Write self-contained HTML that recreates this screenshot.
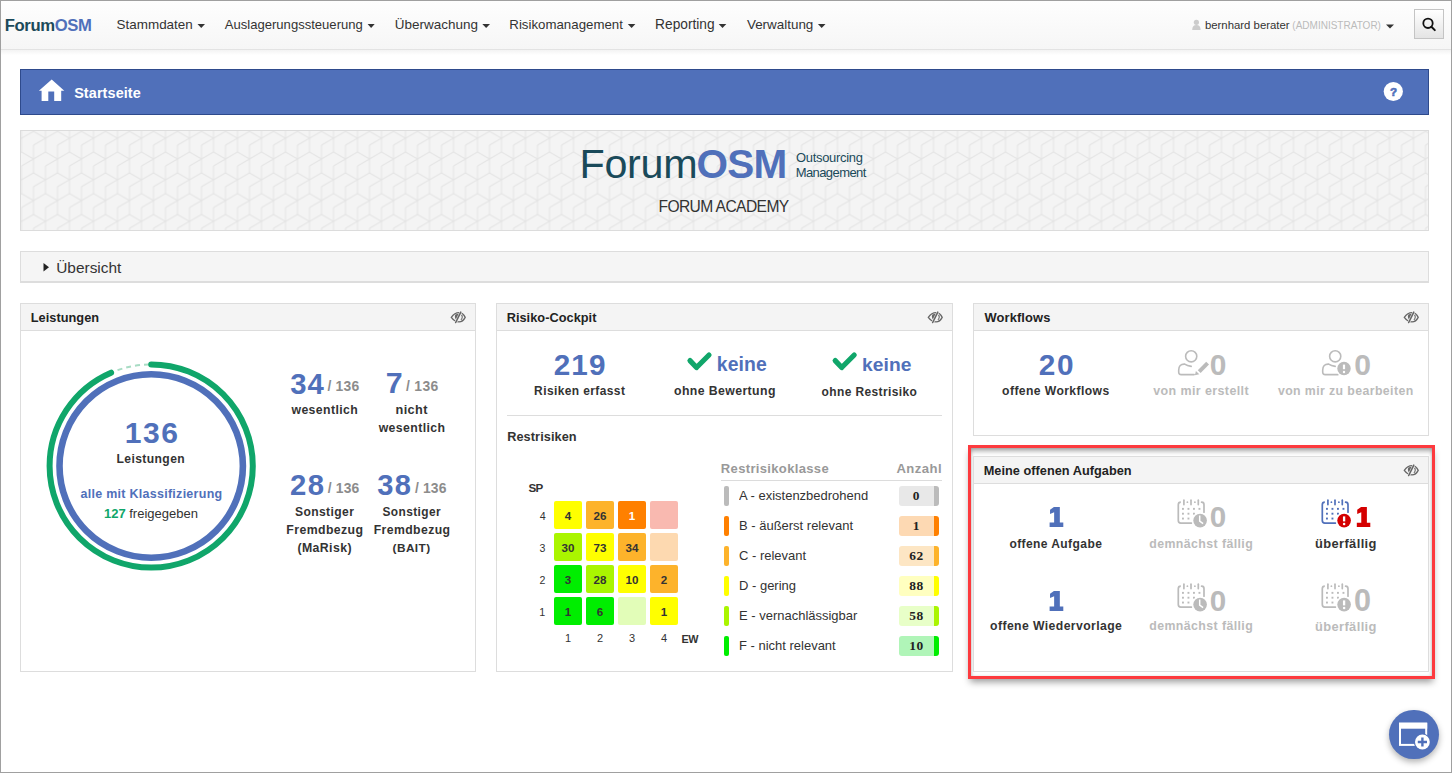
<!DOCTYPE html><html><head><meta charset="utf-8"><style>
html,body{margin:0;padding:0;width:1452px;height:773px;overflow:hidden;background:#fff}
.t{position:absolute;white-space:nowrap}
svg{position:absolute;overflow:visible}
</style></head><body>
<div style="position:absolute;left:1px;top:1px;width:1450px;height:49px;box-sizing:border-box;background:linear-gradient(#fefefe,#f6f6f6);border-bottom:1px solid #e3e3e3"></div>
<div style="position:absolute;left:1px;top:50px;width:1450px;height:5px;box-sizing:border-box;background:linear-gradient(#f3f3f3,#fff)"></div>
<div class="t" style="left:4.72px;top:18.00px;font:bold 16.67px/1 'Liberation Sans',sans-serif;letter-spacing:-0.356px;color:#1c4a5a;">Forum<span style="color:#5070ba">OSM</span></div>
<div class="t" style="left:116.60px;top:18.00px;font:normal 13.44px/1 'Liberation Sans',sans-serif;letter-spacing:0.000px;color:#333;">Stammdaten</div>
<svg style="left:0;top:0" width="1" height="1"><path d="M197.5,24 L205,24 L201.25,28 Z" fill="#333"/></svg>
<div class="t" style="left:224.80px;top:18.00px;font:normal 13.07px/1 'Liberation Sans',sans-serif;letter-spacing:0.000px;color:#333;">Auslagerungssteuerung</div>
<svg style="left:0;top:0" width="1" height="1"><path d="M367.6,24 L374.7,24 L371.15,28 Z" fill="#333"/></svg>
<div class="t" style="left:394.79px;top:18.00px;font:normal 13.48px/1 'Liberation Sans',sans-serif;letter-spacing:0.000px;color:#333;">Überwachung</div>
<svg style="left:0;top:0" width="1" height="1"><path d="M482.3,24 L490,24 L486.15,28 Z" fill="#333"/></svg>
<div class="t" style="left:509.34px;top:18.00px;font:normal 13.27px/1 'Liberation Sans',sans-serif;letter-spacing:0.000px;color:#333;">Risikomanagement</div>
<svg style="left:0;top:0" width="1" height="1"><path d="M627.8,24 L635.4,24 L631.5999999999999,28 Z" fill="#333"/></svg>
<div class="t" style="left:655.10px;top:18.00px;font:normal 13.72px/1 'Liberation Sans',sans-serif;letter-spacing:0.000px;color:#333;">Reporting</div>
<svg style="left:0;top:0" width="1" height="1"><path d="M718.7,24 L726.3,24 L722.5,28 Z" fill="#333"/></svg>
<div class="t" style="left:746.93px;top:18.00px;font:normal 13.43px/1 'Liberation Sans',sans-serif;letter-spacing:0.000px;color:#333;">Verwaltung</div>
<svg style="left:0;top:0" width="1" height="1"><path d="M817.9,24 L825.5,24 L821.7,28 Z" fill="#333"/></svg>
<svg style="left:0;top:0" width="1" height="1"><circle cx="1196.4" cy="22.3" r="2.6" fill="#ccc"/><path d="M1192.2,30 Q1192.2,25 1196.4,25 Q1200.6,25 1200.6,30 Z" fill="#ccc"/></svg>
<div class="t" style="left:1204.96px;top:20.00px;font:normal 11.36px/1 'Liberation Sans',sans-serif;letter-spacing:0.000px;color:#333;">bernhard berater</div>
<div class="t" style="left:1292.30px;top:21.00px;font:normal 10.02px/1 'Liberation Sans',sans-serif;letter-spacing:0.000px;color:#bbb;">(ADMINISTRATOR)</div>
<svg style="left:0;top:0" width="1" height="1"><path d="M1386,24.5 L1394,24.5 L1390,28.5 Z" fill="#333"/></svg>
<div style="position:absolute;left:1414px;top:9px;width:30px;height:30px;box-sizing:border-box;border:1px solid #c4c4c4;background:linear-gradient(#fff,#e4e4e4)"></div>
<svg style="left:0;top:0" width="1" height="1"><circle cx="1428" cy="23.3" r="4.7" fill="none" stroke="#111" stroke-width="1.8"/><path d="M1431.4,26.7 L1434.8,30.1" stroke="#111" stroke-width="2" stroke-linecap="round"/></svg>
<div style="position:absolute;left:20px;top:69px;width:1409px;height:46px;box-sizing:border-box;background:#5070ba;border:1px solid #2e4a8c"></div>
<svg style="left:0;top:0" width="1" height="1"><path d="M51.7,79.4 L64.3,90.8 L61.2,90.8 L61.2,101.1 L54.2,101.1 L54.2,91.6 L48.3,91.6 L48.3,101.1 L41.6,101.1 L41.6,90.8 L38.9,90.8 Z" fill="#fff"/></svg>
<div class="t" style="left:74.17px;top:86.00px;font:bold 14.42px/1 'Liberation Sans',sans-serif;letter-spacing:0.106px;color:#fff;">Startseite</div>
<svg style="left:0;top:0" width="1" height="1"><circle cx="1393.3" cy="91.5" r="9.6" fill="#fff"/></svg>
<div class="t" style="left:1389.88px;top:87.00px;font:bold 11.57px/1 'Liberation Sans',sans-serif;letter-spacing:0.000px;color:#5070ba;-webkit-text-stroke:0.6px #5070ba">?</div>
<svg style="left:20px;top:130px" width="1409" height="101"><defs><pattern id="cube" patternUnits="userSpaceOnUse" width="24" height="41.569" x="25.5" y="1.3">
<g stroke="#e3e3e3" stroke-width="1" fill="none">
<path d="M0,-6.93 V20.78 M0,34.64 V62.35 M24,-6.93 V20.78 M24,34.64 V62.35 M12,13.86 V41.57 M12,-27.71 V0"/>
<path d="M0,6.93 L12,0 M0,6.93 L-12,0 M0,6.93 L-12,13.86 M24,6.93 L36,0 M24,6.93 L12,0 M24,6.93 L12,13.86"/>
<path d="M0,48.5 L12,41.57 M0,48.5 L-12,41.57 M24,48.5 L12,41.57"/>
<path d="M12,27.71 L24,20.78 M12,27.71 L0,20.78 M12,27.71 L0,34.64"/>
<path d="M12,-13.86 L24,-20.78 M12,-13.86 L0,-20.78 M12,-13.86 L0,-6.93"/>
</g></pattern></defs>
<rect x="0.5" y="0.5" width="1408" height="100" fill="#f4f4f4" stroke="#dcdcdc"/>
<rect x="1" y="1" width="1407" height="99" fill="url(#cube)"/>
</svg>
<div class="t" style="left:579.50px;top:144.00px;font:normal 41.29px/1 'Liberation Sans',sans-serif;letter-spacing:-0.309px;color:#1a4a5a;">Forum</div>
<div class="t" style="left:696.48px;top:144.00px;font:bold 40.50px/1 'Liberation Sans',sans-serif;letter-spacing:-0.695px;color:#5070ba;">OSM</div>
<div class="t" style="left:796.12px;top:152.00px;font:normal 12.94px/1 'Liberation Sans',sans-serif;letter-spacing:-0.304px;color:#1a4a5a;">Outsourcing</div>
<div class="t" style="left:795.66px;top:166.00px;font:normal 13.01px/1 'Liberation Sans',sans-serif;letter-spacing:-0.578px;color:#1a4a5a;">Management</div>
<div class="t" style="left:658.45px;top:199.00px;font:normal 15.62px/1 'Liberation Sans',sans-serif;letter-spacing:-0.589px;color:#333;">FORUM ACADEMY</div>
<div style="position:absolute;left:20px;top:251px;width:1409px;height:32px;box-sizing:border-box;background:#f5f5f5;border:1px solid #ddd;border-bottom:2px solid #ddd"></div>
<svg style="left:0;top:0" width="1" height="1"><path d="M43.5,263 L49,267.3 L43.5,271.6 Z" fill="#222"/></svg>
<div class="t" style="left:56.24px;top:260.00px;font:normal 15.41px/1 'Liberation Sans',sans-serif;letter-spacing:0.000px;color:#333;">Übersicht</div>
<div style="position:absolute;left:20px;top:303px;width:456px;height:369px;box-sizing:border-box;border:1px solid #ddd;background:#fff"></div>
<div style="position:absolute;left:20px;top:303px;width:456px;height:28px;box-sizing:border-box;border:1px solid #ddd;background:#f4f4f4"></div>
<div class="t" style="left:30.67px;top:312.00px;font:bold 12.77px/1 'Liberation Sans',sans-serif;letter-spacing:0.044px;color:#222;">Leistungen</div>
<svg style="left:447px;top:308px" width="24" height="18">
<path d="M4.3,9.4 C6.5,6.3 9.3,4.7 12,4.7 C14.6,4.7 16.8,6.5 18.2,9.4 C16.8,12.2 14.6,13.9 12,13.9 C9.2,13.9 6.5,12.4 4.3,9.4 Z" fill="none" stroke="#666" stroke-width="1.3"/>
<path d="M8.3,6.5 L12.9,5.3 L9.6,12.6 Q7,9.6 8.3,6.5 Z" fill="#666"/>
<path d="M14.5,6.9 C15.6,8.2 15.6,10.4 13.9,11.8" fill="none" stroke="#666" stroke-width="1.1"/>
<path d="M14.1,3.6 L8.5,15" stroke="#f4f4f4" stroke-width="2.6"/>
<path d="M13.8,4.2 L8.7,14.5" stroke="#666" stroke-width="1.6" stroke-linecap="round"/>
</svg>
<div style="position:absolute;left:496px;top:303px;width:457px;height:369px;box-sizing:border-box;border:1px solid #ddd;background:#fff"></div>
<div style="position:absolute;left:496px;top:303px;width:457px;height:28px;box-sizing:border-box;border:1px solid #ddd;background:#f4f4f4"></div>
<div class="t" style="left:506.67px;top:312.00px;font:bold 12.76px/1 'Liberation Sans',sans-serif;letter-spacing:0.039px;color:#222;">Risiko-Cockpit</div>
<svg style="left:924px;top:308px" width="24" height="18">
<path d="M4.3,9.4 C6.5,6.3 9.3,4.7 12,4.7 C14.6,4.7 16.8,6.5 18.2,9.4 C16.8,12.2 14.6,13.9 12,13.9 C9.2,13.9 6.5,12.4 4.3,9.4 Z" fill="none" stroke="#666" stroke-width="1.3"/>
<path d="M8.3,6.5 L12.9,5.3 L9.6,12.6 Q7,9.6 8.3,6.5 Z" fill="#666"/>
<path d="M14.5,6.9 C15.6,8.2 15.6,10.4 13.9,11.8" fill="none" stroke="#666" stroke-width="1.1"/>
<path d="M14.1,3.6 L8.5,15" stroke="#f4f4f4" stroke-width="2.6"/>
<path d="M13.8,4.2 L8.7,14.5" stroke="#666" stroke-width="1.6" stroke-linecap="round"/>
</svg>
<div style="position:absolute;left:973px;top:303px;width:456px;height:133px;box-sizing:border-box;border:1px solid #ddd;background:#fff"></div>
<div style="position:absolute;left:973px;top:303px;width:456px;height:28px;box-sizing:border-box;border:1px solid #ddd;background:#f4f4f4"></div>
<div class="t" style="left:984.50px;top:312.00px;font:bold 12.88px/1 'Liberation Sans',sans-serif;letter-spacing:0.116px;color:#222;">Workflows</div>
<svg style="left:1400px;top:308px" width="24" height="18">
<path d="M4.3,9.4 C6.5,6.3 9.3,4.7 12,4.7 C14.6,4.7 16.8,6.5 18.2,9.4 C16.8,12.2 14.6,13.9 12,13.9 C9.2,13.9 6.5,12.4 4.3,9.4 Z" fill="none" stroke="#666" stroke-width="1.3"/>
<path d="M8.3,6.5 L12.9,5.3 L9.6,12.6 Q7,9.6 8.3,6.5 Z" fill="#666"/>
<path d="M14.5,6.9 C15.6,8.2 15.6,10.4 13.9,11.8" fill="none" stroke="#666" stroke-width="1.1"/>
<path d="M14.1,3.6 L8.5,15" stroke="#f4f4f4" stroke-width="2.6"/>
<path d="M13.8,4.2 L8.7,14.5" stroke="#666" stroke-width="1.6" stroke-linecap="round"/>
</svg>
<div style="position:absolute;left:968px;top:445px;width:467px;height:234px;box-sizing:border-box;border:3px solid #fd3a3e;box-shadow:0 5px 7px -2px rgba(0,0,0,.4), inset 0 4px 5px -1px rgba(0,0,0,.35), inset 0 0 3px rgba(0,0,0,.12)"></div>
<div style="position:absolute;left:973px;top:456px;width:456px;height:216px;box-sizing:border-box;border:1px solid #ddd;background:#fff"></div>
<div style="position:absolute;left:973px;top:456px;width:456px;height:28px;box-sizing:border-box;border:1px solid #ddd;background:#f4f4f4"></div>
<div class="t" style="left:983.67px;top:465.00px;font:bold 12.74px/1 'Liberation Sans',sans-serif;letter-spacing:0.028px;color:#222;">Meine offenen Aufgaben</div>
<svg style="left:1400px;top:461px" width="24" height="18">
<path d="M4.3,9.4 C6.5,6.3 9.3,4.7 12,4.7 C14.6,4.7 16.8,6.5 18.2,9.4 C16.8,12.2 14.6,13.9 12,13.9 C9.2,13.9 6.5,12.4 4.3,9.4 Z" fill="none" stroke="#666" stroke-width="1.3"/>
<path d="M8.3,6.5 L12.9,5.3 L9.6,12.6 Q7,9.6 8.3,6.5 Z" fill="#666"/>
<path d="M14.5,6.9 C15.6,8.2 15.6,10.4 13.9,11.8" fill="none" stroke="#666" stroke-width="1.1"/>
<path d="M14.1,3.6 L8.5,15" stroke="#f4f4f4" stroke-width="2.6"/>
<path d="M13.8,4.2 L8.7,14.5" stroke="#666" stroke-width="1.6" stroke-linecap="round"/>
</svg>
<div style="position:absolute;left:1389.4px;top:710.2px;width:49.2px;height:49.2px;border-radius:50%;background:#5070ba;box-shadow:0 3px 6px rgba(0,0,0,.3)"></div>
<svg style="left:0;top:0" width="1" height="1">
<rect x="1400" y="723.7" width="26.2" height="21.2" fill="none" stroke="#fff" stroke-width="2"/>
<rect x="1399" y="722.7" width="28.2" height="6" fill="#fff"/>
<circle cx="1422.4" cy="742" r="8.6" fill="#5070ba"/>
<circle cx="1422.4" cy="742" r="7.4" fill="#fff"/>
<path d="M1417.8,742 H1427 M1422.4,737.4 V746.6" stroke="#5070ba" stroke-width="2.4"/>
</svg>
<svg style="left:0;top:0" width="1" height="1">
<circle cx="151.2" cy="466" r="91.7" fill="none" stroke="#5070ba" stroke-width="6.6"/>
<circle cx="151.2" cy="466" r="101.6" fill="none" stroke="#a8dcc4" stroke-width="2" stroke-dasharray="5 4" transform="rotate(-90 151.2 466)"/>
<circle cx="151.2" cy="466" r="101.6" fill="none" stroke="#fff" stroke-width="8" stroke-dasharray="599.13 638.3716272094459" stroke-dashoffset="1.5" transform="rotate(-90 151.2 466)"/>
<circle cx="151.2" cy="466" r="101.6" fill="none" stroke="#10a66a" stroke-width="6" stroke-linecap="round" stroke-dasharray="596.13 638.3716272094459" transform="rotate(-90 151.2 466)"/>
</svg>
<div class="t" style="left:124.80px;top:418.00px;font:bold 30.06px/1 'Liberation Sans',sans-serif;letter-spacing:1.504px;color:#5070ba;">136</div>
<div class="t" style="left:116.51px;top:453.00px;font:bold 12.11px/1 'Liberation Sans',sans-serif;letter-spacing:0.400px;color:#333;">Leistungen</div>
<div class="t" style="left:80.53px;top:488.00px;font:bold 12.47px/1 'Liberation Sans',sans-serif;letter-spacing:0.283px;color:#5070ba;">alle mit Klassifizierung</div>
<div class="t" style="left:103.92px;top:507.00px;font:normal 13.03px/1 'Liberation Sans',sans-serif;letter-spacing:0.000px;color:#333;"><span style="color:#10a66a;font-weight:bold">127</span> freigegeben</div>
<div class="t" style="left:290.17px;top:369.00px;font:bold 29.28px/1 'Liberation Sans',sans-serif;letter-spacing:1.076px;color:#5070ba;">34</div>
<div class="t" style="left:327.56px;top:380.00px;font:bold 13.90px/1 'Liberation Sans',sans-serif;letter-spacing:0.174px;color:#8c8c8c;">/ 136</div>
<div class="t" style="left:385.69px;top:368.00px;font:bold 30.35px/1 'Liberation Sans',sans-serif;letter-spacing:0.000px;color:#5070ba;">7</div>
<div class="t" style="left:406.06px;top:380.00px;font:bold 13.90px/1 'Liberation Sans',sans-serif;letter-spacing:0.299px;color:#8c8c8c;">/ 136</div>
<div class="t" style="left:289.97px;top:470.00px;font:bold 29.31px/1 'Liberation Sans',sans-serif;letter-spacing:1.370px;color:#5070ba;">28</div>
<div class="t" style="left:327.76px;top:482.00px;font:bold 13.90px/1 'Liberation Sans',sans-serif;letter-spacing:0.174px;color:#8c8c8c;">/ 136</div>
<div class="t" style="left:377.37px;top:471.00px;font:bold 29.12px/1 'Liberation Sans',sans-serif;letter-spacing:1.180px;color:#5070ba;">38</div>
<div class="t" style="left:415.06px;top:482.00px;font:bold 13.90px/1 'Liberation Sans',sans-serif;letter-spacing:0.125px;color:#8c8c8c;">/ 136</div>
<div class="t" style="left:291.46px;top:404.00px;font:bold 12.28px/1 'Liberation Sans',sans-serif;letter-spacing:0.400px;color:#333;">wesentlich</div>
<div class="t" style="left:395.47px;top:404.00px;font:bold 12.73px/1 'Liberation Sans',sans-serif;letter-spacing:0.400px;color:#333;">nicht</div>
<div class="t" style="left:378.66px;top:422.00px;font:bold 12.27px/1 'Liberation Sans',sans-serif;letter-spacing:0.400px;color:#333;">wesentlich</div>
<div class="t" style="left:294.94px;top:506.00px;font:bold 12.10px/1 'Liberation Sans',sans-serif;letter-spacing:0.400px;color:#333;">Sonstiger</div>
<div class="t" style="left:286.30px;top:524.00px;font:bold 12.30px/1 'Liberation Sans',sans-serif;letter-spacing:0.400px;color:#333;">Fremdbezug</div>
<div class="t" style="left:297.49px;top:542.00px;font:bold 12.29px/1 'Liberation Sans',sans-serif;letter-spacing:0.400px;color:#333;">(MaRisk)</div>
<div class="t" style="left:382.54px;top:507.00px;font:bold 11.90px/1 'Liberation Sans',sans-serif;letter-spacing:0.400px;color:#333;">Sonstiger</div>
<div class="t" style="left:373.70px;top:524.00px;font:bold 12.24px/1 'Liberation Sans',sans-serif;letter-spacing:0.400px;color:#333;">Fremdbezug</div>
<div class="t" style="left:392.61px;top:543.00px;font:bold 11.83px/1 'Liberation Sans',sans-serif;letter-spacing:0.400px;color:#333;">(BAIT)</div>
<div class="t" style="left:553.66px;top:350.00px;font:bold 29.69px/1 'Liberation Sans',sans-serif;letter-spacing:1.121px;color:#5070ba;">219</div>
<div class="t" style="left:534.12px;top:386.00px;font:bold 11.97px/1 'Liberation Sans',sans-serif;letter-spacing:0.400px;color:#333;">Risiken erfasst</div>
<svg style="left:0;top:0" width="1" height="1"><path d="M690,360.6 L696.5,367.5 L709,355" fill="none" stroke="#10a66a" stroke-width="5.2" stroke-linecap="round" stroke-linejoin="round"/></svg>
<svg style="left:0;top:0" width="1" height="1"><path d="M835.2,360.6 L841.7,367.5 L854.2,355" fill="none" stroke="#10a66a" stroke-width="5.2" stroke-linecap="round" stroke-linejoin="round"/></svg>
<div class="t" style="left:716.84px;top:355.00px;font:bold 19.36px/1 'Liberation Sans',sans-serif;letter-spacing:0.116px;color:#5070ba;">keine</div>
<div class="t" style="left:862.05px;top:355.00px;font:bold 19.24px/1 'Liberation Sans',sans-serif;letter-spacing:0.041px;color:#5070ba;">keine</div>
<div class="t" style="left:674.01px;top:385.00px;font:bold 12.29px/1 'Liberation Sans',sans-serif;letter-spacing:0.400px;color:#333;">ohne Bewertung</div>
<div class="t" style="left:821.52px;top:386.00px;font:bold 11.98px/1 'Liberation Sans',sans-serif;letter-spacing:0.400px;color:#333;">ohne Restrisiko</div>
<div style="position:absolute;left:507px;top:415px;width:435px;height:1px;box-sizing:border-box;background:#ddd"></div>
<div class="t" style="left:507.17px;top:431.00px;font:bold 12.72px/1 'Liberation Sans',sans-serif;letter-spacing:0.091px;color:#333;">Restrisiken</div>
<div class="t" style="left:528.55px;top:482.00px;font:bold 11.62px/1 'Liberation Sans',sans-serif;letter-spacing:-0.851px;color:#333;">SP</div>
<div class="t" style="left:539.79px;top:511.00px;font:normal 10.72px/1 'Liberation Sans',sans-serif;letter-spacing:0.000px;color:#333;">4</div>
<div style="position:absolute;left:554px;top:501px;width:28px;height:28px;box-sizing:border-box;background:#ffff00;border-radius:2px"></div>
<div class="t" style="left:554px;top:509.8px;width:28px;text-align:center;font:bold 11.6px/1 'Liberation Sans',sans-serif;color:#333">4</div>
<div style="position:absolute;left:586px;top:501px;width:28px;height:28px;box-sizing:border-box;background:#fdb32b;border-radius:2px"></div>
<div class="t" style="left:586px;top:509.8px;width:28px;text-align:center;font:bold 11.6px/1 'Liberation Sans',sans-serif;color:#333">26</div>
<div style="position:absolute;left:618px;top:501px;width:28px;height:28px;box-sizing:border-box;background:#ff8000;border-radius:2px"></div>
<div class="t" style="left:618px;top:509.8px;width:28px;text-align:center;font:bold 11.6px/1 'Liberation Sans',sans-serif;color:#fff">1</div>
<div style="position:absolute;left:650px;top:501px;width:28px;height:28px;box-sizing:border-box;background:#f9b9b0;border-radius:2px"></div>
<div class="t" style="left:539.58px;top:543.00px;font:normal 10.57px/1 'Liberation Sans',sans-serif;letter-spacing:0.000px;color:#333;">3</div>
<div style="position:absolute;left:554px;top:533px;width:28px;height:28px;box-sizing:border-box;background:#aaf500;border-radius:2px"></div>
<div class="t" style="left:554px;top:541.8px;width:28px;text-align:center;font:bold 11.6px/1 'Liberation Sans',sans-serif;color:#333">30</div>
<div style="position:absolute;left:586px;top:533px;width:28px;height:28px;box-sizing:border-box;background:#ffff00;border-radius:2px"></div>
<div class="t" style="left:586px;top:541.8px;width:28px;text-align:center;font:bold 11.6px/1 'Liberation Sans',sans-serif;color:#333">73</div>
<div style="position:absolute;left:618px;top:533px;width:28px;height:28px;box-sizing:border-box;background:#fdb32b;border-radius:2px"></div>
<div class="t" style="left:618px;top:541.8px;width:28px;text-align:center;font:bold 11.6px/1 'Liberation Sans',sans-serif;color:#333">34</div>
<div style="position:absolute;left:650px;top:533px;width:28px;height:28px;box-sizing:border-box;background:#fdd9b0;border-radius:2px"></div>
<div class="t" style="left:539.47px;top:575.00px;font:normal 10.57px/1 'Liberation Sans',sans-serif;letter-spacing:0.000px;color:#333;">2</div>
<div style="position:absolute;left:554px;top:565px;width:28px;height:28px;box-sizing:border-box;background:#00ee00;border-radius:2px"></div>
<div class="t" style="left:554px;top:573.8px;width:28px;text-align:center;font:bold 11.6px/1 'Liberation Sans',sans-serif;color:#333">3</div>
<div style="position:absolute;left:586px;top:565px;width:28px;height:28px;box-sizing:border-box;background:#aaf500;border-radius:2px"></div>
<div class="t" style="left:586px;top:573.8px;width:28px;text-align:center;font:bold 11.6px/1 'Liberation Sans',sans-serif;color:#333">28</div>
<div style="position:absolute;left:618px;top:565px;width:28px;height:28px;box-sizing:border-box;background:#ffff00;border-radius:2px"></div>
<div class="t" style="left:618px;top:573.8px;width:28px;text-align:center;font:bold 11.6px/1 'Liberation Sans',sans-serif;color:#333">10</div>
<div style="position:absolute;left:650px;top:565px;width:28px;height:28px;box-sizing:border-box;background:#fdb32b;border-radius:2px"></div>
<div class="t" style="left:650px;top:573.8px;width:28px;text-align:center;font:bold 11.6px/1 'Liberation Sans',sans-serif;color:#333">2</div>
<div class="t" style="left:539.20px;top:607.00px;font:normal 10.72px/1 'Liberation Sans',sans-serif;letter-spacing:0.000px;color:#333;">1</div>
<div style="position:absolute;left:554px;top:597px;width:28px;height:28px;box-sizing:border-box;background:#00ee00;border-radius:2px"></div>
<div class="t" style="left:554px;top:605.8px;width:28px;text-align:center;font:bold 11.6px/1 'Liberation Sans',sans-serif;color:#333">1</div>
<div style="position:absolute;left:586px;top:597px;width:28px;height:28px;box-sizing:border-box;background:#00ee00;border-radius:2px"></div>
<div class="t" style="left:586px;top:605.8px;width:28px;text-align:center;font:bold 11.6px/1 'Liberation Sans',sans-serif;color:#333">6</div>
<div style="position:absolute;left:618px;top:597px;width:28px;height:28px;box-sizing:border-box;background:#e2fdb8;border-radius:2px"></div>
<div style="position:absolute;left:650px;top:597px;width:28px;height:28px;box-sizing:border-box;background:#ffff00;border-radius:2px"></div>
<div class="t" style="left:650px;top:605.8px;width:28px;text-align:center;font:bold 11.6px/1 'Liberation Sans',sans-serif;color:#333">1</div>
<div class="t" style="left:554px;top:633.4px;width:28px;text-align:center;font:normal 11px/1 'Liberation Sans',sans-serif;color:#333">1</div>
<div class="t" style="left:586px;top:633.4px;width:28px;text-align:center;font:normal 11px/1 'Liberation Sans',sans-serif;color:#333">2</div>
<div class="t" style="left:618px;top:633.4px;width:28px;text-align:center;font:normal 11px/1 'Liberation Sans',sans-serif;color:#333">3</div>
<div class="t" style="left:650px;top:633.4px;width:28px;text-align:center;font:normal 11px/1 'Liberation Sans',sans-serif;color:#333">4</div>
<div class="t" style="left:681.39px;top:634.00px;font:bold 10.85px/1 'Liberation Sans',sans-serif;letter-spacing:-0.259px;color:#333;">EW</div>
<div class="t" style="left:720.85px;top:462.00px;font:bold 13.04px/1 'Liberation Sans',sans-serif;letter-spacing:0.328px;color:#999;">Restrisikoklasse</div>
<div class="t" style="left:896.47px;top:462.00px;font:bold 13.10px/1 'Liberation Sans',sans-serif;letter-spacing:0.436px;color:#999;">Anzahl</div>
<div style="position:absolute;left:721px;top:480px;width:221px;height:1px;box-sizing:border-box;background:#dcdcdc"></div>
<div style="position:absolute;left:724px;top:486px;width:5px;height:20px;box-sizing:border-box;background:#bbb;border-radius:2px"></div>
<div class="t" style="left:739.1px;top:489px;font:normal 13.6px/1 'Liberation Sans',sans-serif;color:#333;transform:scaleX(0.955);transform-origin:0 0">A - existenzbedrohend</div>
<div style="position:absolute;left:899px;top:486px;width:40px;height:20px;box-sizing:border-box;background:#e8e8e8;border-radius:3px;border-right:5px solid #bbb"></div>
<div class="t" style="left:899px;top:488.86px;width:35px;text-align:center;font:bold 13.4px/1 'Liberation Serif',serif;letter-spacing:0.6px;color:#222">0</div>
<div style="position:absolute;left:724px;top:516px;width:5px;height:20px;box-sizing:border-box;background:#ff8000;border-radius:2px"></div>
<div class="t" style="left:739.1px;top:519px;font:normal 13.6px/1 'Liberation Sans',sans-serif;color:#333;transform:scaleX(0.955);transform-origin:0 0">B - äußerst relevant</div>
<div style="position:absolute;left:899px;top:516px;width:40px;height:20px;box-sizing:border-box;background:#fdd9b3;border-radius:3px;border-right:5px solid #ff8000"></div>
<div class="t" style="left:899px;top:518.86px;width:35px;text-align:center;font:bold 13.4px/1 'Liberation Serif',serif;letter-spacing:0.6px;color:#222">1</div>
<div style="position:absolute;left:724px;top:546px;width:5px;height:20px;box-sizing:border-box;background:#fdb32b;border-radius:2px"></div>
<div class="t" style="left:739.1px;top:549px;font:normal 13.6px/1 'Liberation Sans',sans-serif;color:#333;transform:scaleX(0.955);transform-origin:0 0">C - relevant</div>
<div style="position:absolute;left:899px;top:546px;width:40px;height:20px;box-sizing:border-box;background:#fde6c4;border-radius:3px;border-right:5px solid #fdb32b"></div>
<div class="t" style="left:899px;top:548.86px;width:35px;text-align:center;font:bold 13.4px/1 'Liberation Serif',serif;letter-spacing:0.6px;color:#222">62</div>
<div style="position:absolute;left:724px;top:576px;width:5px;height:20px;box-sizing:border-box;background:#ffff00;border-radius:2px"></div>
<div class="t" style="left:739.1px;top:579px;font:normal 13.6px/1 'Liberation Sans',sans-serif;color:#333;transform:scaleX(0.955);transform-origin:0 0">D - gering</div>
<div style="position:absolute;left:899px;top:576px;width:40px;height:20px;box-sizing:border-box;background:#ffffc0;border-radius:3px;border-right:5px solid #ffff00"></div>
<div class="t" style="left:899px;top:578.86px;width:35px;text-align:center;font:bold 13.4px/1 'Liberation Serif',serif;letter-spacing:0.6px;color:#222">88</div>
<div style="position:absolute;left:724px;top:606px;width:5px;height:20px;box-sizing:border-box;background:#aaf500;border-radius:2px"></div>
<div class="t" style="left:739.1px;top:609px;font:normal 13.6px/1 'Liberation Sans',sans-serif;color:#333;transform:scaleX(0.955);transform-origin:0 0">E - vernachlässigbar</div>
<div style="position:absolute;left:899px;top:606px;width:40px;height:20px;box-sizing:border-box;background:#e8ffc8;border-radius:3px;border-right:5px solid #aaf500"></div>
<div class="t" style="left:899px;top:608.86px;width:35px;text-align:center;font:bold 13.4px/1 'Liberation Serif',serif;letter-spacing:0.6px;color:#222">58</div>
<div style="position:absolute;left:724px;top:636px;width:5px;height:20px;box-sizing:border-box;background:#00ee00;border-radius:2px"></div>
<div class="t" style="left:739.1px;top:639px;font:normal 13.6px/1 'Liberation Sans',sans-serif;color:#333;transform:scaleX(0.955);transform-origin:0 0">F - nicht relevant</div>
<div style="position:absolute;left:899px;top:636px;width:40px;height:20px;box-sizing:border-box;background:#b0f5b8;border-radius:3px;border-right:5px solid #00ee00"></div>
<div class="t" style="left:899px;top:638.86px;width:35px;text-align:center;font:bold 13.4px/1 'Liberation Serif',serif;letter-spacing:0.6px;color:#222">10</div>
<div class="t" style="left:1038.76px;top:350.00px;font:bold 29.80px/1 'Liberation Sans',sans-serif;letter-spacing:1.562px;color:#5070ba;">20</div>
<div class="t" style="left:1002.11px;top:385.00px;font:bold 12.16px/1 'Liberation Sans',sans-serif;letter-spacing:0.400px;color:#333;">offene Workflows</div>
<div class="t" style="left:1209.70px;top:350.00px;font:bold 29.93px/1 'Liberation Sans',sans-serif;letter-spacing:0.000px;color:#bbb;">0</div>
<div class="t" style="left:1153.24px;top:385.00px;font:bold 12.48px/1 'Liberation Sans',sans-serif;letter-spacing:0.400px;color:#bbb;">von mir erstellt</div>
<div class="t" style="left:1354.19px;top:350.00px;font:bold 30.14px/1 'Liberation Sans',sans-serif;letter-spacing:0.000px;color:#bbb;">0</div>
<div class="t" style="left:1277.94px;top:385.00px;font:bold 12.32px/1 'Liberation Sans',sans-serif;letter-spacing:0.400px;color:#bbb;">von mir zu bearbeiten</div>
<svg style="left:0;top:0" width="1" height="1"><circle cx="1191.2" cy="356.3" r="5.6" fill="none" stroke="#bbb" stroke-width="1.6"/>
<path d="M1191.2,366.40000000000003 Q1187.2,365.8 1184.7,364.1 Q1178.7,363.8 1178.7,370.1 L1178.7,372.3 Q1178.7,374.6 1181.2,374.6 L1194.2,374.6" fill="none" stroke="#bbb" stroke-width="1.6" stroke-linecap="round"/>
<path d="M1207.6,363.2 L1199.2,371.6" stroke="#bbb" stroke-width="4"/>
<path d="M1194.9,375.3 L1195.9,370.9 L1199.3,374.3 Z" fill="#bbb"/>
</svg>
<svg style="left:0;top:0" width="1" height="1"><circle cx="1335.2" cy="356.3" r="5.6" fill="none" stroke="#bbb" stroke-width="1.6"/>
<path d="M1335.2,366.40000000000003 Q1331.2,365.8 1328.7,364.1 Q1322.7,363.8 1322.7,370.1 L1322.7,372.3 Q1322.7,374.6 1325.2,374.6 L1338.2,374.6" fill="none" stroke="#bbb" stroke-width="1.6" stroke-linecap="round"/>
<circle cx="1344" cy="368.5" r="8" fill="#fff"/>
<circle cx="1344" cy="368.5" r="6.7" fill="#bbb"/>
<path d="M1344,364.6 V369.2" stroke="#fff" stroke-width="2.2"/>
<circle cx="1344" cy="372" r="1.2" fill="#fff"/>
</svg>
<svg style="left:0;top:0" width="1" height="1"><path d="M1053.93,507.10 L1059.83,507.10 L1059.83,522.52 L1063.30,522.52 L1063.30,526.90 L1049.61,526.90 L1049.61,522.52 L1054.14,522.52 L1054.14,512.27 L1050.03,513.97 L1050.03,509.69 Z" fill="#5070ba"/></svg>
<svg style="left:0;top:0" width="1" height="1"><g fill="none" stroke="#bbb" stroke-width="1.7" stroke-linecap="round"><path d="M1180.4,502.2 L1180.8,502.2 Q1178.3,502.2 1178.3,504.7 L1178.3,520.6 Q1178.3,523.1 1180.8,523.1 L1191.5,523.1"/><path d="M1201.6,502.2 Q1204,502.2 1204,504.7 L1204,512.2"/><path d="M1183.9,500.2 V504.6"/><path d="M1191,500.2 V504.6"/><path d="M1198.3,500.2 V504.6"/></g><circle cx="1187.4" cy="502.2" r="0.9" fill="#bbb"/><circle cx="1194.9" cy="502.2" r="0.9" fill="#bbb"/><rect x="1182.0" y="507.9" width="1.9" height="1.9" fill="#bbb"/><rect x="1187.5" y="507.9" width="1.9" height="1.9" fill="#bbb"/><rect x="1193.0" y="507.9" width="1.9" height="1.9" fill="#bbb"/><rect x="1198.5" y="507.9" width="1.9" height="1.9" fill="#bbb"/><rect x="1182.0" y="512.75" width="1.9" height="1.9" fill="#bbb"/><rect x="1187.5" y="512.75" width="1.9" height="1.9" fill="#bbb"/><rect x="1193.0" y="512.75" width="1.9" height="1.9" fill="#bbb"/><rect x="1182.0" y="517.6" width="1.9" height="1.9" fill="#bbb"/><rect x="1187.5" y="517.6" width="1.9" height="1.9" fill="#bbb"/><circle cx="1200.1" cy="520.6" r="8.1" fill="#fff"/><circle cx="1200.1" cy="520.6" r="6.8" fill="#bbb"/><path d="M1199.6999999999998,515.4 L1199.6999999999998,521.2 L1203.1,523.6" fill="none" stroke="#fff" stroke-width="1.5"/></svg>
<div class="t" style="left:1209.82px;top:502.00px;font:bold 29.61px/1 'Liberation Sans',sans-serif;letter-spacing:0.000px;color:#bbb;">0</div>
<div class="t" style="left:1149.21px;top:538.00px;font:bold 12.36px/1 'Liberation Sans',sans-serif;letter-spacing:0.400px;color:#bbb;">demnächst fällig</div>
<svg style="left:0;top:0" width="1" height="1"><path d="M1053.93,591.10 L1059.83,591.10 L1059.83,606.52 L1063.30,606.52 L1063.30,610.90 L1049.61,610.90 L1049.61,606.52 L1054.14,606.52 L1054.14,596.27 L1050.03,597.97 L1050.03,593.69 Z" fill="#5070ba"/></svg>
<svg style="left:0;top:0" width="1" height="1"><g fill="none" stroke="#bbb" stroke-width="1.7" stroke-linecap="round"><path d="M1180.4,586.2 L1180.8,586.2 Q1178.3,586.2 1178.3,588.7 L1178.3,604.6 Q1178.3,607.1 1180.8,607.1 L1191.5,607.1"/><path d="M1201.6,586.2 Q1204,586.2 1204,588.7 L1204,596.2"/><path d="M1183.9,584.2 V588.6"/><path d="M1191,584.2 V588.6"/><path d="M1198.3,584.2 V588.6"/></g><circle cx="1187.4" cy="586.2" r="0.9" fill="#bbb"/><circle cx="1194.9" cy="586.2" r="0.9" fill="#bbb"/><rect x="1182.0" y="591.9" width="1.9" height="1.9" fill="#bbb"/><rect x="1187.5" y="591.9" width="1.9" height="1.9" fill="#bbb"/><rect x="1193.0" y="591.9" width="1.9" height="1.9" fill="#bbb"/><rect x="1198.5" y="591.9" width="1.9" height="1.9" fill="#bbb"/><rect x="1182.0" y="596.75" width="1.9" height="1.9" fill="#bbb"/><rect x="1187.5" y="596.75" width="1.9" height="1.9" fill="#bbb"/><rect x="1193.0" y="596.75" width="1.9" height="1.9" fill="#bbb"/><rect x="1182.0" y="601.6" width="1.9" height="1.9" fill="#bbb"/><rect x="1187.5" y="601.6" width="1.9" height="1.9" fill="#bbb"/><circle cx="1200.1" cy="604.6" r="8.1" fill="#fff"/><circle cx="1200.1" cy="604.6" r="6.8" fill="#bbb"/><path d="M1199.6999999999998,599.4 L1199.6999999999998,605.2 L1203.1,607.6" fill="none" stroke="#fff" stroke-width="1.5"/></svg>
<div class="t" style="left:1209.82px;top:586.00px;font:bold 29.61px/1 'Liberation Sans',sans-serif;letter-spacing:0.000px;color:#bbb;">0</div>
<div class="t" style="left:1149.21px;top:620.00px;font:bold 12.36px/1 'Liberation Sans',sans-serif;letter-spacing:0.400px;color:#bbb;">demnächst fällig</div>
<div class="t" style="left:1009.42px;top:538.00px;font:bold 12.06px/1 'Liberation Sans',sans-serif;letter-spacing:0.400px;color:#333;">offene Aufgabe</div>
<div class="t" style="left:990.11px;top:620.00px;font:bold 12.23px/1 'Liberation Sans',sans-serif;letter-spacing:0.400px;color:#333;">offene Wiedervorlage</div>
<svg style="left:0;top:0" width="1" height="1"><g fill="none" stroke="#5070ba" stroke-width="1.7" stroke-linecap="round"><path d="M1324.4,502.2 L1324.8,502.2 Q1322.3,502.2 1322.3,504.7 L1322.3,520.6 Q1322.3,523.1 1324.8,523.1 L1335.5,523.1"/><path d="M1345.6,502.2 Q1348,502.2 1348,504.7 L1348,512.2"/><path d="M1327.9,500.2 V504.6"/><path d="M1335,500.2 V504.6"/><path d="M1342.3,500.2 V504.6"/></g><circle cx="1331.4" cy="502.2" r="0.9" fill="#5070ba"/><circle cx="1338.9" cy="502.2" r="0.9" fill="#5070ba"/><rect x="1326.0" y="507.9" width="1.9" height="1.9" fill="#5070ba"/><rect x="1331.5" y="507.9" width="1.9" height="1.9" fill="#5070ba"/><rect x="1337.0" y="507.9" width="1.9" height="1.9" fill="#5070ba"/><rect x="1342.5" y="507.9" width="1.9" height="1.9" fill="#5070ba"/><rect x="1326.0" y="512.75" width="1.9" height="1.9" fill="#5070ba"/><rect x="1331.5" y="512.75" width="1.9" height="1.9" fill="#5070ba"/><rect x="1337.0" y="512.75" width="1.9" height="1.9" fill="#5070ba"/><rect x="1326.0" y="517.6" width="1.9" height="1.9" fill="#5070ba"/><rect x="1331.5" y="517.6" width="1.9" height="1.9" fill="#5070ba"/><circle cx="1344.1" cy="520.6" r="8.1" fill="#fff"/><circle cx="1344.1" cy="520.6" r="6.8" fill="#d40000"/><path d="M1344.1,516.4 V521.4" stroke="#fff" stroke-width="2.3"/><circle cx="1344.1" cy="524.0" r="1.25" fill="#fff"/></svg>
<svg style="left:0;top:0" width="1" height="1"><path d="M1361.06,507.00 L1366.88,507.00 L1366.88,522.66 L1370.30,522.66 L1370.30,527.10 L1356.81,527.10 L1356.81,522.66 L1361.27,522.66 L1361.27,512.25 L1357.22,513.97 L1357.22,509.63 Z" fill="#d40000"/></svg>
<div class="t" style="left:1314.93px;top:538.00px;font:bold 12.89px/1 'Liberation Sans',sans-serif;letter-spacing:0.400px;color:#333;">überfällig</div>
<svg style="left:0;top:0" width="1" height="1"><g fill="none" stroke="#bbb" stroke-width="1.7" stroke-linecap="round"><path d="M1324.4,586.2 L1324.8,586.2 Q1322.3,586.2 1322.3,588.7 L1322.3,604.6 Q1322.3,607.1 1324.8,607.1 L1335.5,607.1"/><path d="M1345.6,586.2 Q1348,586.2 1348,588.7 L1348,596.2"/><path d="M1327.9,584.2 V588.6"/><path d="M1335,584.2 V588.6"/><path d="M1342.3,584.2 V588.6"/></g><circle cx="1331.4" cy="586.2" r="0.9" fill="#bbb"/><circle cx="1338.9" cy="586.2" r="0.9" fill="#bbb"/><rect x="1326.0" y="591.9" width="1.9" height="1.9" fill="#bbb"/><rect x="1331.5" y="591.9" width="1.9" height="1.9" fill="#bbb"/><rect x="1337.0" y="591.9" width="1.9" height="1.9" fill="#bbb"/><rect x="1342.5" y="591.9" width="1.9" height="1.9" fill="#bbb"/><rect x="1326.0" y="596.75" width="1.9" height="1.9" fill="#bbb"/><rect x="1331.5" y="596.75" width="1.9" height="1.9" fill="#bbb"/><rect x="1337.0" y="596.75" width="1.9" height="1.9" fill="#bbb"/><rect x="1326.0" y="601.6" width="1.9" height="1.9" fill="#bbb"/><rect x="1331.5" y="601.6" width="1.9" height="1.9" fill="#bbb"/><circle cx="1344.1" cy="604.6" r="8.1" fill="#fff"/><circle cx="1344.1" cy="604.6" r="6.8" fill="#bbb"/><path d="M1344.1,600.4 V605.4" stroke="#fff" stroke-width="2.3"/><circle cx="1344.1" cy="608.0" r="1.25" fill="#fff"/></svg>
<div class="t" style="left:1353.98px;top:585.00px;font:bold 30.60px/1 'Liberation Sans',sans-serif;letter-spacing:0.000px;color:#bbb;">0</div>
<div class="t" style="left:1314.93px;top:621.00px;font:bold 12.89px/1 'Liberation Sans',sans-serif;letter-spacing:0.400px;color:#bbb;">überfällig</div>
<div style="position:absolute;left:0;top:0;width:1452px;height:773px;box-sizing:border-box;border:1px solid #a0a0a0;pointer-events:none"></div>
</body></html>
